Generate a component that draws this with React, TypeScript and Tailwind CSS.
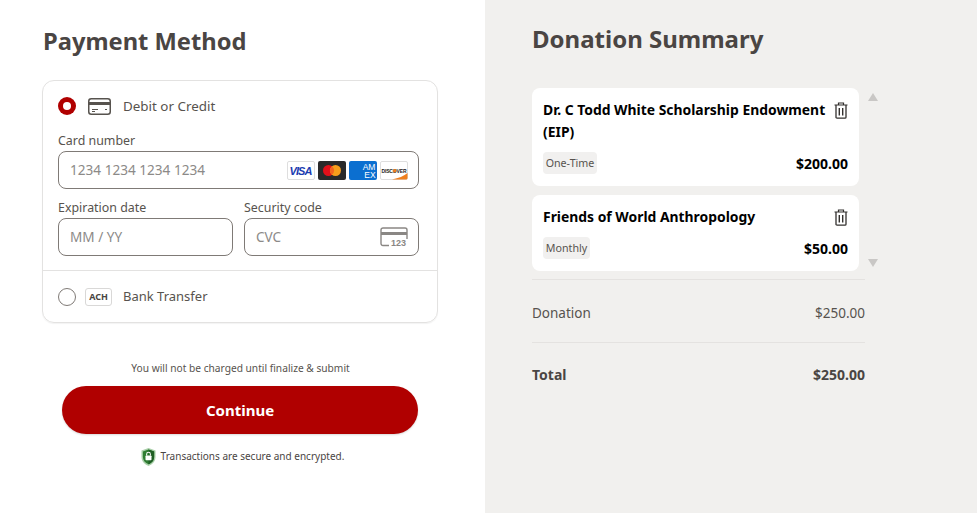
const font = { fontFamily: '"Noto Sans", "Open Sans", sans-serif' }

function CardIcon() {
  return (
    <svg width="23" height="17" viewBox="0 0 23 17" fill="none" className="block">
      <rect x="0.75" y="0.75" width="21.5" height="15.5" rx="2.5" stroke="#57534e" strokeWidth="1.5" />
      <rect x="1" y="4" width="21" height="3" fill="#57534e" />
      <path d="M4 11.5h6M4 13.5h3M17 11.5h2" stroke="#57534e" strokeWidth="1" />
    </svg>
  )
}

function Visa() {
  return (
    <svg width="28" height="19" viewBox="0 0 28 19" className="block">
      <rect x="0.5" y="0.5" width="27" height="18" rx="1.5" fill="#fff" stroke="#dedede" />
      <text x="14" y="13.5" textAnchor="middle" fontSize="11" fontWeight="700" fontStyle="italic" fill="#1a3bb0" fontFamily="Liberation Sans" textLength="23">VISA</text>
    </svg>
  )
}

function Mastercard() {
  return (
    <svg width="28" height="19" viewBox="0 0 28 19" className="block">
      <rect width="28" height="19" rx="2" fill="#2a2a2a" />
      <circle cx="10.5" cy="9.5" r="5.5" fill="#e3101a" />
      <circle cx="17.5" cy="9.5" r="5.5" fill="#f79e1b" />
      <path d="M14 5.2a5.5 5.5 0 0 1 0 8.6a5.5 5.5 0 0 1 0-8.6z" fill="#f4641e" />
    </svg>
  )
}

function Amex() {
  return (
    <svg width="28" height="19" viewBox="0 0 28 19" className="block">
      <rect width="28" height="19" rx="2" fill="#0b6fd0" />
      <text x="20" y="8.5" textAnchor="middle" fontSize="8.5" fill="#fff" fontFamily="Liberation Sans">AM</text>
      <text x="21" y="17" textAnchor="middle" fontSize="8.5" fill="#fff" fontFamily="Liberation Sans">EX</text>
    </svg>
  )
}

function Discover() {
  return (
    <svg width="28" height="19" viewBox="0 0 28 19" className="block">
      <rect x="0.5" y="0.5" width="27" height="18" rx="1.5" fill="#fff" stroke="#dedede" />
      <path d="M12 18.5 Q22 16.5 27.5 12 V17 Q27.5 18.5 26 18.5z" fill="#ee7f1f" />
      <text x="14" y="11.5" textAnchor="middle" fontSize="5" fontWeight="700" fill="#222" fontFamily="Liberation Sans" textLength="25">DISCOVER</text>
      <circle cx="14.8" cy="9.8" r="1.8" fill="#ee7f1f" />
    </svg>
  )
}

function CvcIcon() {
  return (
    <svg width="28" height="20" viewBox="0 0 28 20" fill="none" className="block">
      <path d="M9 18.5H3a2 2 0 0 1-2-2V3a2 2 0 0 1 2-2h22a2 2 0 0 1 2 2v9" stroke="#8a8784" strokeWidth="1.4" />
      <rect x="1" y="5" width="26" height="3" fill="#8a8784" />
      <text x="18.5" y="19" textAnchor="middle" fontSize="9" fontWeight="700" fill="#8a8784" fontFamily="Liberation Sans">123</text>
    </svg>
  )
}

function Trash() {
  return (
    <svg width="14" height="17" viewBox="0 0 14 17" fill="none" className="block shrink-0">
      <path d="M0.5 3h13M4.5 3V1h5v2" stroke="#33302e" strokeWidth="1.2" />
      <path d="M2 3v12.2a1 1 0 0 0 1 1h8a1 1 0 0 0 1-1V3" stroke="#33302e" strokeWidth="1.3" />
      <path d="M5.3 6v7.5M8.7 6v7.5" stroke="#33302e" strokeWidth="1.4" />
    </svg>
  )
}

function Shield() {
  return (
    <svg width="15" height="20" viewBox="0 0 16 20" className="block">
      <path d="M8 0.5 15.5 3v7c0 4.500-3.200 7.800-7.500 9.500C3.700 17.800.5 14.500.5 10V3z" fill="#a9cfa9" />
      <path d="M8 2 14 4v6c0 3.600-2.600 6.300-6 7.800C4.600 16.300 2 13.600 2 10V4z" fill="#2f7d32" />
      <path d="M8 2 14 4v6c0 3.600-2.600 6.300-6 7.800z" fill="#1f5e24" />
      <rect x="4.800" y="8.500" width="6.400" height="5" rx="0.800" fill="#fff" />
      <path d="M6 8.500V7a2 2 0 0 1 4 0v1.500" fill="none" stroke="#fff" strokeWidth="1.100" />
    </svg>
  )
}

function Field({ placeholder, children }: { placeholder: string; children?: React.ReactNode }) {
  return (
    <div className="flex h-[38px] items-center justify-between rounded-lg border border-[#7f7a76] pl-[11px] pr-[10px]">
      <span className="text-[13.6px] text-[#8c8a88]">{placeholder}</span>
      {children}
    </div>
  )
}

function DonationCard({ title, tag, amount, tagWidth }: { title: string; tag: string; amount: string; tagWidth: string }) {
  return (
    <div className="rounded-lg bg-white px-[11px] pt-[11px] pb-[12px]">
      <div className="flex items-start justify-between gap-[2px]">
        <div className="text-[13.9px] leading-[22px] font-bold text-black">{title}</div>
        <div className="mt-[3px]"><Trash /></div>
      </div>
      <div className="mt-[9px] flex items-center justify-between">
        <span className={`flex h-[22px] items-center justify-center rounded bg-[#f1f0ef] text-[10.7px] text-[#57534e] ${tagWidth}`}>{tag}</span>
        <span className="mt-px text-[14px] font-bold text-black">{amount}</span>
      </div>
    </div>
  )
}

export default function App() {
  return (
    <div style={font} className="flex h-[513px] w-[977px] overflow-hidden bg-white text-[#4a4543]">
      <div className="w-[485px] shrink-0 pl-[43px] pt-[24px]">
        <h1 className="text-[23.7px] leading-[34px] font-bold text-[#4a4543]">Payment Method</h1>
        <div className="mt-[22px] -ml-px w-[396px] rounded-xl border border-[#e3e2e1] shadow-[0_1px_1px_rgba(0,0,0,0.05)]">
          <div className="pt-[14px] pr-[18px] pb-[14px] pl-[15px]">
            <div className="flex h-[22px] items-center">
              <span className="flex size-[18px] items-center justify-center rounded-full bg-[#b00000]">
                <span className="size-[8px] rounded-full bg-white" />
              </span>
              <span className="ml-[12px]"><CardIcon /></span>
              <span className="ml-[12px] text-[13.4px] text-[#57534e]">Debit or Credit</span>
            </div>
            <div className="mt-[15px] text-[12.4px] leading-[18px] text-[#57534e]">Card number</div>
            <div className="mt-px">
              <Field placeholder="1234 1234 1234 1234">
                <div className="flex items-center gap-[3px]">
                  <Visa />
                  <Mastercard />
                  <Amex />
                  <Discover />
                </div>
              </Field>
            </div>
            <div className="mt-[10px] grid grid-cols-2 gap-[11px]">
              <div>
                <div className="mb-px text-[12.4px] leading-[18px] text-[#57534e]">Expiration date</div>
                <Field placeholder="MM / YY" />
              </div>
              <div>
                <div className="mb-px text-[12.4px] leading-[18px] text-[#57534e]">Security code</div>
                <Field placeholder="CVC"><CvcIcon /></Field>
              </div>
            </div>
          </div>
          <div className="flex h-[52px] items-center border-t border-[#e3e2e1] pt-px pl-[15px]">
            <span className="size-[18px] rounded-full border border-[#7f7a76]" />
            <span className="ml-[9px] flex h-[18px] w-[27px] items-center justify-center rounded-[3px] border border-[#d9d8d7] text-[9px] font-bold text-[#4a4543]">ACH</span>
            <span className="ml-[11px] text-[13px] text-[#57534e]">Bank Transfer</span>
          </div>
        </div>
        <p className="mt-[37px] w-[395px] text-center text-[10.2px] leading-[16px] text-[#57534e]">You will not be charged until finalize &amp; submit</p>
        <button className="mt-[10px] ml-[19px] block h-[48px] w-[356px] rounded-full bg-[#b00000] text-[15px] font-bold text-white shadow-[0_1px_2px_rgba(0,0,0,0.15)]">Continue</button>
        <div className="mt-[13px] flex w-[395px] items-center justify-center gap-[5px] pl-[4px]">
          <Shield />
          <span className="mb-[2px] text-[10px] text-[#4a4543]">Transactions are secure and encrypted.</span>
        </div>
      </div>
      <div className="flex-1 bg-[#f1f0ee] pl-[47px] pt-[22px]">
        <h2 className="text-[24px] leading-[34px] font-bold text-[#4a4543]">Donation Summary</h2>
        <div className="mt-[32px] flex w-[350px]">
          <div className="flex w-[327px] flex-col gap-[9px]">
            <DonationCard title="Dr. C Todd White Scholarship Endowment (EIP)" tag="One-Time" amount="$200.00" tagWidth="w-[54px]" />
            <DonationCard title="Friends of World Anthropology" tag="Monthly" amount="$50.00" tagWidth="w-[47px]" />
          </div>
          <div className="ml-[9px] flex flex-col justify-between pt-[5px] pb-[4px]">
            <span className="h-0 w-0 border-x-[5px] border-b-[8px] border-x-transparent border-b-[#c9c7c5]" />
            <span className="h-0 w-0 border-x-[5px] border-t-[8px] border-x-transparent border-t-[#c9c7c5]" />
          </div>
        </div>
        <div className="mt-[8px] w-[333px] border-t border-[#e4e2e0]">
          <div className="flex h-[63px] items-center justify-between border-b border-[#e4e2e0] pt-[4px] text-[13.5px] text-[#57534e]">
            <span>Donation</span>
            <span>$250.00</span>
          </div>
          <div className="flex h-[63px] items-center justify-between text-[14px] font-bold text-[#4a4543]">
            <span>Total</span>
            <span>$250.00</span>
          </div>
        </div>
      </div>
    </div>
  )
}
